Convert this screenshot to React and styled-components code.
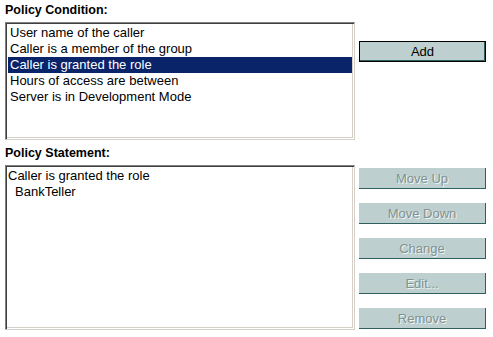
import styled, { createGlobalStyle } from "styled-components";

const GlobalStyle = createGlobalStyle`
  html, body {
    margin: 0;
    padding: 0;
    background: #fff;
  }
  body {
    font-family: "Liberation Sans", Arial, sans-serif;
    font-size: 13px;
    color: #000;
  }
`;

const Page = styled.div`
  width: 493px;
  height: 337px;
  padding: 3px 0 0 5px;
  box-sizing: border-box;
`;

const Section = styled.section`
  margin-top: ${(p) => p.$top || 0}px;
`;

const Label = styled.h2`
  margin: 0 0 5px;
  font-size: 12.5px;
  line-height: 14px;
  font-weight: bold;
`;

const Row = styled.div`
  display: flex;
  align-items: flex-start;
  gap: 4px;
`;

const ListBox = styled.div`
  width: 350px;
  height: ${(p) => p.$height}px;
  box-sizing: border-box;
  padding: 2px;
  background: #fff;
  border: 1px solid;
  border-color: #808080 #d4d0c8 #d4d0c8 #808080;
  box-shadow: inset 1px 1px 0 #404040, inset -1px -1px 0 #fff,
    inset -2px -2px 0 #d4d0c8;
  overflow: hidden;
`;

const Option = styled.div`
  height: 16px;
  line-height: 16px;
  padding-left: ${(p) => (p.$indent ? 7 : p.$pad ? 2 : 0)}px;
  white-space: nowrap;
  background: ${(p) => (p.$selected ? "#0a246a" : "transparent")};
  color: ${(p) => (p.$selected ? "#fff" : "#000")};
`;

const ButtonColumn = styled.div`
  display: flex;
  flex-direction: column;
  gap: ${(p) => p.$gap || 0}px;
  padding-top: ${(p) => p.$top}px;
`;

const Button = styled.button`
  width: 127px;
  height: 21px;
  box-sizing: border-box;
  margin: 0;
  padding: 0;
  font-family: "Liberation Sans", Arial, sans-serif;
  font-size: 13px;
  line-height: 19px;
  text-align: center;
  background: #bdcfcf;
  color: #000;
  border: 1px solid #000;
  box-shadow: inset -1px -1px 0 #2f5f5f;
  cursor: pointer;

  &:disabled {
    border: none;
    border-right: 1px solid #2f5f5f;
    border-bottom: 1px solid #2f5f5f;
    box-shadow: none;
    color: #829292;
    text-shadow: 1px 1px 0 #eef5f5;
    cursor: default;
  }
`;

const conditions = [
  "User name of the caller",
  "Caller is a member of the group",
  "Caller is granted the role",
  "Hours of access are between",
  "Server is in Development Mode",
];

const actions = ["Move Up", "Move Down", "Change", "Edit...", "Remove"];

export default function App() {
  return (
    <>
      <GlobalStyle />
      <Page>
        <Section>
          <Label>Policy Condition:</Label>
          <Row>
            <ListBox $height={118}>
              {conditions.map((c, i) => (
                <Option key={c} $pad $selected={i === 2}>
                  {c}
                </Option>
              ))}
            </ListBox>
            <ButtonColumn $top={19}>
              <Button>Add</Button>
            </ButtonColumn>
          </Row>
        </Section>

        <Section $top={6}>
          <Label>Policy Statement:</Label>
          <Row>
            <ListBox $height={165}>
              <Option>Caller is granted the role</Option>
              <Option $indent>BankTeller</Option>
            </ListBox>
            <ButtonColumn $top={3} $gap={14}>
              {actions.map((a) => (
                <Button key={a} disabled>
                  {a}
                </Button>
              ))}
            </ButtonColumn>
          </Row>
        </Section>
      </Page>
    </>
  );
}
